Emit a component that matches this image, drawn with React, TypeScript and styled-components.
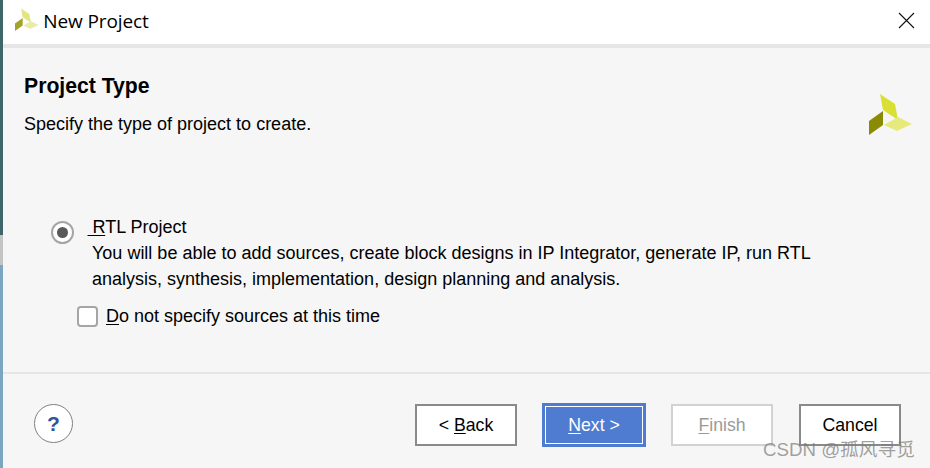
import React from "react";
import styled, { createGlobalStyle } from "styled-components";

const Global = createGlobalStyle`
  html, body { margin: 0; padding: 0; background: #f6f6f6; }
  body { font-family: "Liberation Sans", Arial, sans-serif; color: #000; }
`;
const Frame = styled.div`
  position: relative; display: flex; width: 930px; height: 468px; overflow: hidden;
`;
const Strip = styled.div`
  flex: 0 0 3px; width: 3px; display: flex; flex-direction: column;
`;
const StripPart = styled.div<{ $h: number; $c: string }>`
  flex: 0 0 ${(p) => p.$h}px; background: ${(p) => p.$c};
`;
const Dialog = styled.div`
  flex: 1; display: flex; flex-direction: column; min-width: 0; background: #f6f6f6;
`;
const TitleBar = styled.div`
  height: 48px; box-sizing: border-box; flex: none; display: flex; align-items: center; background: #fff;
  border-bottom: 4px solid #e6e6e6; padding: 0 15px 3px 12px;
`;
const TitleText = styled.div`
  font-family: "Open Sans", "Noto Sans", sans-serif; font-size: 19px; margin-left: 4px; flex: 1; letter-spacing: -0.1px;
`;
const Close = styled.button`
  all: unset; display: flex; width: 17px; height: 17px;
`;
const Header = styled.div`
  flex: none; height: 96px; display: flex; justify-content: space-between; padding: 0 17px 0 21px;
`;
const HeaderText = styled.div`
  display: flex; flex-direction: column;
`;
const Heading = styled.h1`
  margin: 25px 0 0; font-size: 21.2px; line-height: 26px; font-weight: 700;
`;
const Subheading = styled.p`
  margin: 15px 0 0; font-size: 18px; line-height: 20px;
`;
const LogoBox = styled.div`
  margin-top: 45px; display: flex;
`;
const Content = styled.div`
  flex: 1; padding: 70px 0 0 48px; font-size: 18px; line-height: 26px;
`;
const OptionRow = styled.div`
  display: flex;
`;
const Radio = styled.span`
  flex: none; width: 23px; height: 23px; box-sizing: border-box; border-radius: 50%;
  border: 2px solid #a5a5a5; background: #fff; display: flex; align-items: center; justify-content: center;
  margin-top: 7px;
  &::after { content: ""; width: 11px; height: 11px; border-radius: 50%; background: #595959; }
`;
const OptionText = styled.div`
  margin-left: 18px; width: 760px;
`;
const OptionTitle = styled.div`
  margin-left: -4.5px;
`;
const Mn = styled.span`
  text-decoration: underline; text-underline-offset: 2px;
`;
const CheckRow = styled.label`
  display: flex; align-items: center; margin: 11px 0 0 26px;
`;
const CheckBox = styled.span`
  flex: none; width: 21px; height: 21px; box-sizing: border-box; border: 2px solid #a5a5a5;
  border-radius: 4px; background: #fff; margin-right: 8px;
`;
const Footer = styled.div`
  flex: none; height: 96px; box-sizing: border-box; border-top: 2px solid #e6e6e6;
  display: flex; align-items: flex-start; padding: 29px 29px 0 31px;
`;
const Help = styled.button`
  all: unset; width: 39px; height: 39px; box-sizing: border-box; border: 1px solid #808080; border-radius: 50%;
  background: #fff; color: #2f5597; font: 700 21px "Liberation Sans", sans-serif;
  display: flex; align-items: center; justify-content: center; margin-top: 1px;
`;
const Buttons = styled.div`
  margin-left: auto; display: flex; align-items: center; gap: 25px;
`;
const Btn = styled.button<{ $kind?: "primary" | "disabled" }>`
  all: unset; box-sizing: border-box; display: flex; align-items: center; justify-content: center;
  font-size: 17.7px; width: 102px; height: 42px; background: #fff; border: 2px solid #8a8a8a; color: #000;
  ${(p) => p.$kind === "disabled" && `border-color: #d2d2d2; color: #9a9a9a; margin-right: 1px;`}
  ${(p) => p.$kind === "primary" && `
    width: 104px; height: 44px; background: #4f7cd0; border: 3px solid #4f7cd0; color: #fff;
    outline: 1px solid #fff; outline-offset: -4px;
  `}
`;
const Watermark = styled.div`
  position: absolute; left: 763px; top: 438px; font-size: 18.7px; line-height: 24px; white-space: nowrap;
  font-family: "Liberation Sans", "Noto Sans CJK SC", sans-serif; color: rgba(120,120,120,0.7);
`;

const Logo = ({ scale, pale }: { scale: number; pale?: boolean }) => (
  <svg width={44 * scale} height={44 * scale} viewBox="0 0 44 44">
    <polygon points="11,1 26,11 29,27 14,17" fill={pale ? "#e3e680" : "#d9e033"} />
    <polygon points="14,18 14,32 0,42 0,28" fill={pale ? "#a3a32a" : "#8b8a05"} />
    <polygon points="15,32 29,24 43,31 28,38" fill={pale ? "#e8ebaa" : "#e6ea7c"} />
  </svg>
);

export default function App() {
  return (
    <Frame>
      <Global />
      <Strip>
        <StripPart $h={235} $c="#3f6669" />
        <StripPart $h={30} $c="#c4c4c4" />
        <StripPart $h={203} $c="#7aa6c0" />
      </Strip>
      <Dialog>
        <TitleBar>
          <Logo scale={0.55} pale />
          <TitleText>New Project</TitleText>
          <Close aria-label="Close">
            <svg width="17" height="17" viewBox="0 0 17 17"><path d="M1 1 L16 16 M16 1 L1 16" stroke="#111" strokeWidth="1.1" fill="none" /></svg>
          </Close>
        </TitleBar>
        <Header>
          <HeaderText>
            <Heading>Project Type</Heading>
            <Subheading>Specify the type of project to create.</Subheading>
          </HeaderText>
          <LogoBox><Logo scale={1} /></LogoBox>
        </Header>
        <Content>
          <OptionRow>
            <Radio />
            <OptionText>
              <OptionTitle><Mn>&nbsp;R</Mn>TL Project</OptionTitle>
              You will be able to add sources, create block designs in IP Integrator, generate IP, run RTL analysis, synthesis, implementation, design planning and analysis.
            </OptionText>
          </OptionRow>
          <CheckRow><CheckBox /><span><Mn>D</Mn>o not specify sources at this time</span></CheckRow>
        </Content>
        <Footer>
          <Help>?</Help>
          <Buttons>
            <Btn>&lt;&nbsp;<Mn>B</Mn>ack</Btn>
            <Btn $kind="primary"><Mn>N</Mn>ext &gt;</Btn>
            <Btn $kind="disabled"><Mn>F</Mn>inish</Btn>
            <Btn>Cancel</Btn>
          </Buttons>
        </Footer>
      </Dialog>
      <Watermark>CSDN @孤风寻觅</Watermark>
    </Frame>
  );
}
